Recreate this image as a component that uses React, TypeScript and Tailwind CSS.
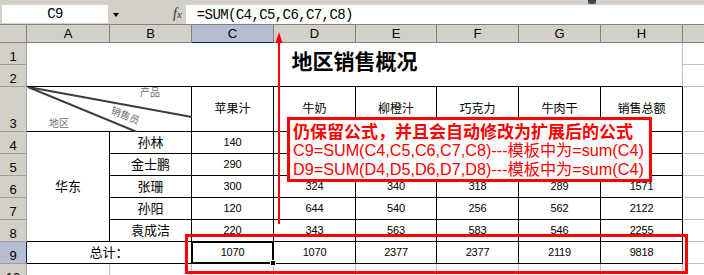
import React from "react";

const rowHead =
  "bg-[#d4d0c8] border-r border-[#808080] border-b border-[#a0a0a0] flex items-end justify-center pb-[1px] text-[13px] leading-[13px] text-black";
const cell =
  "flex items-center justify-center border-r border-b border-black";
const num = cell + " text-[11px] tracking-[-0.2px]";
const cjk = cell + " text-[12px]";
const extra = "border-b border-[#c0c0c0]";

const body = [
  { n: 4, name: "孙林", v: ["140", "", "", "", "", ""] },
  { n: 5, name: "金士鹏", v: ["290", "", "", "", "", ""] },
  { n: 6, name: "张珊", v: ["300", "324", "340", "318", "289", "1571"] },
  { n: 7, name: "孙阳", v: ["120", "644", "540", "256", "562", "2122"] },
  { n: 8, name: "袁成洁", v: ["220", "343", "563", "583", "546", "2255"] },
];
const totals = ["1070", "1070", "2377", "2377", "2119", "9818"];
const products = ["苹果汁", "牛奶", "柳橙汁", "巧克力", "牛肉干", "销售总额"];
const letters = ["A", "B", "C", "D", "E", "F", "G", "H"];

export default function App() {
  return (
    <div className="relative w-[704px] h-[275px] overflow-hidden bg-white text-black font-['Liberation_Sans','Noto_Sans_CJK_SC',sans-serif]">
      {/* formula bar */}
      <div className="flex h-[25px] bg-[#d4d0c8] border-b border-[#808080] pt-[5px]">
        <div className="ml-[2px] w-[106px] h-[18px] bg-white flex items-center justify-center font-['Liberation_Mono',monospace] text-[14px] tracking-[-0.6px] leading-none">
          C9
        </div>
        <div className="ml-[5px] mt-[8px] w-0 h-0 border-l-[3.5px] border-r-[3.5px] border-t-[4px] border-l-transparent border-r-transparent border-t-black" />
        <div className="ml-[54px] mt-[1px] font-['Liberation_Serif',serif] italic text-[14px] leading-[16px] text-[#333]">
          f<span className="text-[11px]">x</span>
        </div>
        <div className="ml-[4px] flex-1 h-[19px] bg-white flex items-center pl-[11px] font-['Liberation_Mono',monospace] text-[14px] tracking-[-0.6px] leading-none">
          =SUM(C4,C5,C6,C7,C8)
        </div>
      </div>

      {/* column headers */}
      <div className="grid grid-cols-[27px_83px_82px_82px_82px_81px_82px_82px_82px_1fr] h-[18px]">
        <div className="bg-[#d4d0c8] border-r border-b border-[#808080]" />
        {letters.map((l) => (
          <div
            key={l}
            className={
              "flex items-center justify-center text-[13px] leading-none border-r border-b " +
              (l === "C"
                ? "bg-[#b6bdd2] border-r-[#808080] border-b-[#0a246a]"
                : "bg-[#d4d0c8] border-[#808080]")
            }
          >
            {l}
          </div>
        ))}
        <div className="bg-[#d4d0c8] border-b border-[#808080]" />
      </div>

      {/* sheet body */}
      <div className="grid grid-cols-[27px_83px_82px_82px_82px_81px_82px_82px_82px_1fr] grid-rows-[22px_22px_45px_22px_22px_22px_22px_22px_22px_22px]">
        {/* row 1-2 */}
        <div className={rowHead}>1</div>
        <div className="col-span-8 row-span-2 border-r border-r-[#c0c0c0] border-b border-b-black flex items-center justify-center pb-[6px] text-[21px] font-bold leading-none">
          地区销售概况
        </div>
        <div className={extra} />
        <div className={rowHead}>2</div>
        <div className={extra} />

        {/* row 3 */}
        <div className={rowHead}>3</div>
        <div className="col-span-2 relative border-r border-b border-black">
          <svg className="absolute left-0 top-0" width="165" height="45" viewBox="0 0 165 45">
            <line x1="1" y1="0" x2="165" y2="30" stroke="#3c3c3c" strokeWidth="2" />
            <line x1="1" y1="0" x2="110" y2="45" stroke="#3c3c3c" strokeWidth="2" />
          </svg>
          <span className="absolute left-[113px] top-[1px] text-[10px] leading-[10px] text-[#707070]">产品</span>
          <span className="absolute left-[98px] top-[29px] -translate-x-1/2 -translate-y-1/2 rotate-[23deg] text-[10px] leading-[10px] text-[#707070] whitespace-nowrap">
            销售员
          </span>
          <span className="absolute left-[22px] top-[32px] text-[10px] leading-[10px] text-[#707070]">地区</span>
        </div>
        {products.map((p) => (
          <div key={p} className={cjk}>
            {p}
          </div>
        ))}
        <div className={extra} />

        {/* rows 4-8 */}
        {body.map((r, i) => (
          <React.Fragment key={r.n}>
            <div className={rowHead}>{r.n}</div>
            {i === 0 && (
              <div className={cell + " row-span-5 text-[13px]"}>华东</div>
            )}
            <div className={cell + " text-[13px]"}>{r.name}</div>
            {r.v.map((v, j) => (
              <div key={j} className={num}>
                {v}
              </div>
            ))}
            <div className={extra} />
          </React.Fragment>
        ))}

        {/* row 9 */}
        <div className="bg-[#b6bdd2] border-r border-[#0a246a] border-b border-b-[#a0a0a0] flex items-end justify-center pb-[1px] text-[13px] leading-[13px]">
          9
        </div>
        <div className={cell + " col-span-2 text-[13px]"}>总计：</div>
        {totals.map((t, j) => (
          <div key={j} className={num + (j === 0 ? " relative" : "")}>
            {t}
            {j === 0 && (
              <>
                <div className="absolute -left-[1px] -top-[1px] w-[83px] h-[23px] border-2 border-black" />
                <div className="absolute -right-[3px] -bottom-[3px] w-[6px] h-[6px] bg-black border border-white" />
              </>
            )}
          </div>
        ))}
        <div className={extra} />

        {/* row 10 */}
        <div className={rowHead}>10</div>
        {Array.from({ length: 8 }).map((_, j) => (
          <div key={j} className="border-r border-[#c0c0c0]" />
        ))}
        <div />
      </div>

      {/* toolbar fragment at very top */}
      <div className="absolute left-[588px] top-0 w-[8px] h-[4px] bg-[#4a4a4a] rounded-b-[2px]" />

      {/* red arrow */}
      <svg className="absolute left-[272px] top-[30px]" width="14" height="196" viewBox="0 0 14 196">
        <line x1="7" y1="10" x2="7" y2="194" stroke="#ff0000" strokeWidth="2" />
        <polygon points="7,2 3.5,13 10.5,13" fill="#ff0000" />
      </svg>

      {/* annotation box */}
      <div className="absolute left-[287px] top-[117px] w-[365px] h-[65px] border-[3px] border-[#ff0000] bg-white pl-[3px] pt-[1px] text-[#ff0000] whitespace-nowrap">
        <div className="text-[17px] leading-[19.5px] font-bold font-['Noto_Sans_CJK_SC',sans-serif]">
          仍保留公式，并且会自动修改为扩展后的公式
        </div>
        <div className="text-[16.2px] leading-[19.5px]">C9=SUM(C4,C5,C6,C7,C8)---模板中为=sum(C4)</div>
        <div className="text-[16.2px] leading-[19.5px]">D9=SUM(D4,D5,D6,D7,D8)---模板中为=sum(C4)</div>
      </div>

      {/* red box around totals row */}
      <div className="absolute left-[185px] top-[234px] w-[503px] h-[40px] border-[3px] border-[#ff0000]" />
    </div>
  );
}
